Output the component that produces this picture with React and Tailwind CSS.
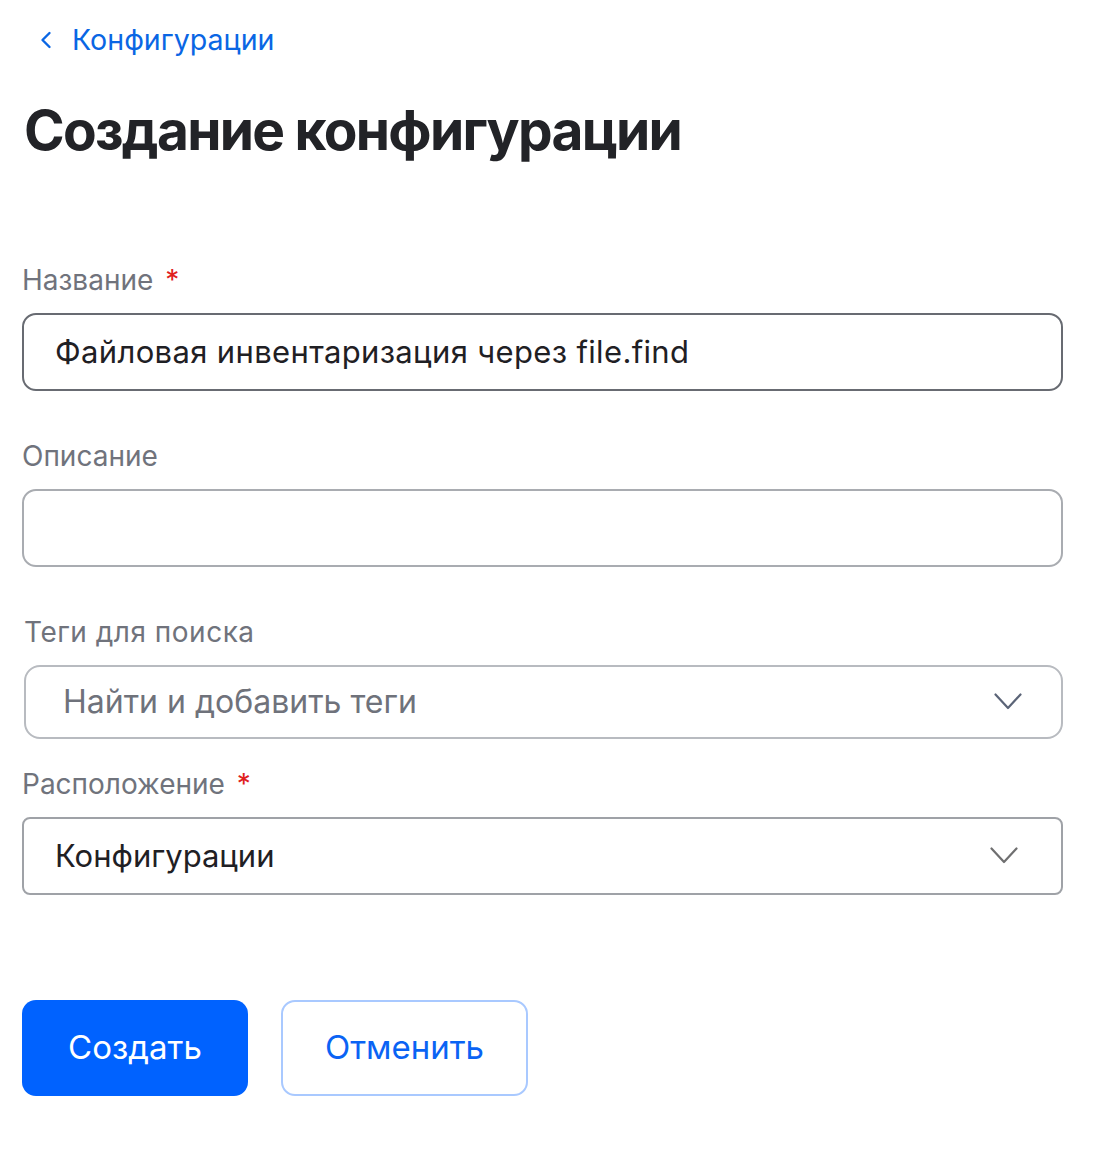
import React from "react";

function Chevron({ className, color = "#5b6477" }) {
  return (
    <svg className={className} viewBox="0 0 28 18" fill="none">
      <path d="M1.5 1.5 L14 15 L26.5 1.5" stroke={color} strokeWidth="2.2" strokeLinecap="round" strokeLinejoin="round" />
    </svg>
  );
}

export default function App() {
  return (
    <div className="min-h-[1149px] bg-white" style={{ fontFamily: "Inter, 'Noto Sans', sans-serif" }}>
      <div className="pt-[22px] pl-[22px] w-[1063px]">
        <a className="flex items-center text-[28.6px] leading-[36px] ml-[18px] text-[#0a66e4]">
          <svg className="w-[12px] h-[18px] mr-[20px]" viewBox="0 0 12 18" fill="none">
            <path d="M9.5 2 L2.5 9 L9.5 16" stroke="#0a66e4" strokeWidth="2.4" strokeLinecap="round" strokeLinejoin="round" />
          </svg>
          Конфигурации
        </a>
        <h1 className="mt-[38px] ml-[2px] text-[55px] leading-[68px] font-bold tracking-[-1.7px] text-[#222327]">
          Создание конфигурации
        </h1>

        <div className="mt-[99px]">
          <div className="text-[28px] leading-[34px] text-[#70737c]">
            Название <span className="text-[#e0201d] ml-[4px]">*</span>
          </div>
          <div className="mt-[16px] h-[78px] border-2 border-[#686b72] rounded-[14px] flex items-center px-[31px] text-[31px] tracking-[0.35px] text-[#1f2024]">
            Файловая инвентаризация через file.find
          </div>
        </div>

        <div className="mt-[48px]">
          <div className="text-[28px] leading-[34px] text-[#70737c]">Описание</div>
          <div className="mt-[16px] h-[78px] border-2 border-[#a9acb1] rounded-[14px]" />
        </div>

        <div className="mt-[48px] ml-[2px]">
          <div className="text-[28px] leading-[34px] text-[#70737c] tracking-[0.5px]">Теги для поиска</div>
          <div className="mt-[16px] h-[74px] border-2 border-[#b8bbc0] rounded-[16px] flex items-center justify-between pl-[37px] pr-[39px]">
            <span className="text-[32px] text-[#6f727b]">Найти и добавить теги</span>
            <Chevron className="w-[28px] h-[18px]" color="#5b6477" />
          </div>
        </div>

        <div className="mt-[28px]">
          <div className="text-[28px] leading-[34px] text-[#70737c]">
            Расположение <span className="text-[#e0201d] ml-[4px]">*</span>
          </div>
          <div className="mt-[16px] h-[78px] border-2 border-[#9fa2a7] rounded-[8px] flex items-center justify-between pl-[31px] pr-[43px]">
            <span className="text-[31px] text-[#1f2024]">Конфигурации</span>
            <Chevron className="w-[28px] h-[18px]" color="#6f6f70" />
          </div>
        </div>

        <div className="mt-[105px] flex gap-[33px]">
          <button className="w-[226px] h-[96px] rounded-[14px] bg-[#0062ff] text-white text-[33px]">Создать</button>
          <button className="w-[247px] h-[96px] rounded-[14px] border-2 border-[#a9c9ff] bg-white text-[#0a63f4] text-[33px]">Отменить</button>
        </div>
      </div>
    </div>
  );
}
